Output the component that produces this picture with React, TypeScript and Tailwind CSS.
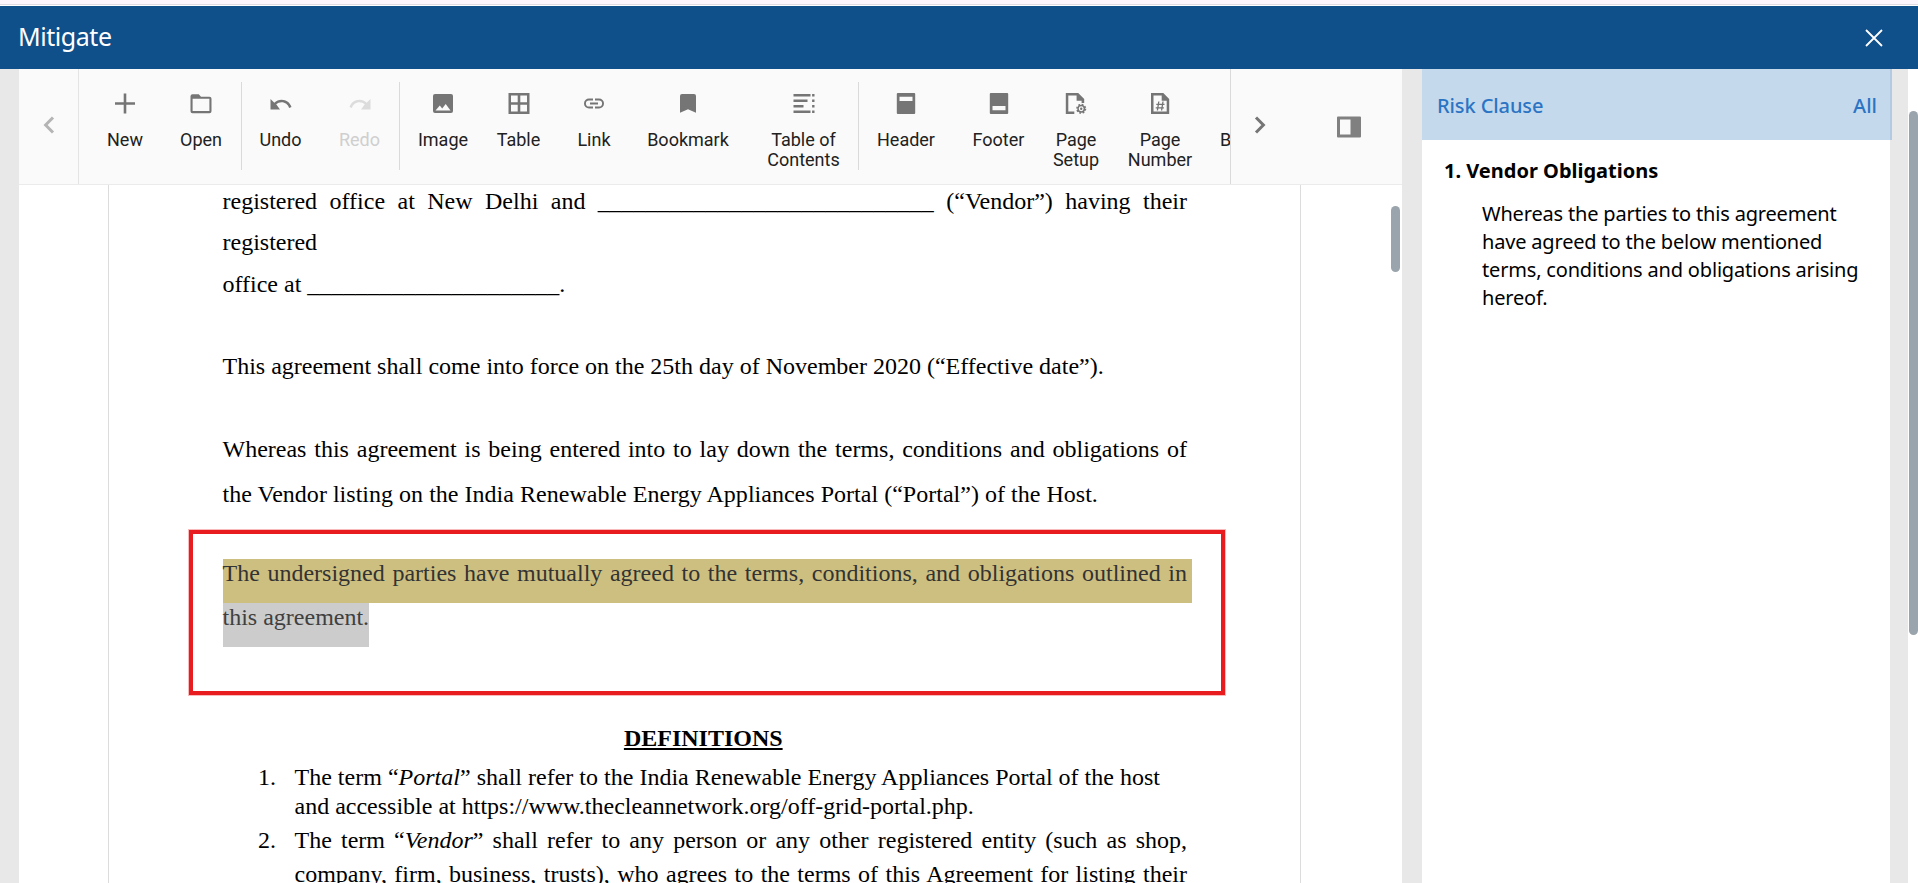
import React from 'react';

const Svg = ({ children, c = '#757575' }: { children: React.ReactNode; c?: string }) => (
  <svg width="24" height="24" viewBox="0 -0.5 24 24" fill={c} className="block shrink-0">{children}</svg>
);

const icons: Record<string, React.ReactNode> = {
  New: <path d="M10.7 2h2.6v8.7H22v2.6h-8.7V22h-2.6v-8.7H2v-2.6h8.7z" />,
  Open: <path fillRule="evenodd" d="M3.5 2.8h6.3l2.2 2.4h8.5a2 2 0 0 1 2 2v12.5a2 2 0 0 1-2 2h-17a2 2 0 0 1-2-2V4.8a2 2 0 0 1 2-2zM3.6 7.3v12.2h16.8V7.3z" />,
  Undo: <path d="M1.5 7.5l3.8 3.7C7.3 9.4 9.700 8.200 12.600 8.200c4.800 0 8.600 3 9.900 7.400l-2.400.8c-1-3.300-4-5.600-7.500-5.600-2 0-3.900.8-5.400 2L11 18H1.500z" />,
  Redo: <path d="M22.500 7.500l-3.800 3.700C16.700 9.400 14.300 8.200 11.400 8.200c-4.800 0-8.600 3-9.900 7.400l2.400.8c1-3.300 4-5.600 7.500-5.600 2 0 3.900.8 5.400 2L13 18h9.500z" />,
  Image: <path fillRule="evenodd" d="M4 2.500h16a2 2 0 0 1 2 2v15a2 2 0 0 1-2 2H4a2 2 0 0 1-2-2v-15a2 2 0 0 1 2-2zM4.500 19h15l-4.800-6.500-3.500 4.600-2.400-3z" />,
  Table: <path fillRule="evenodd" d="M1.500 1.500h21v21h-21zM4 4v6.700h6.700V4zM13.300 4v6.700H20V4zM4 13.300V20h6.700v-6.700zM13.300 13.300V20H20v-6.700z" />,
  Link: <path d="M3.900 12a3.100 3.100 0 0 1 3.100-3.100h4V7H7a5 5 0 0 0 0 10h4v-1.900H7A3.100 3.100 0 0 1 3.900 12zM8 13h8v-2H8zM17 7h-4v1.900h4a3.100 3.100 0 0 1 0 6.200h-4V17h4a5 5 0 0 0 0-10z" />,
  Bookmark: <path d="M6 2.500h12a2 2 0 0 1 2 2v16.700l-8-3.400-8 3.400V4.500a2 2 0 0 1 2-2z" />,
  TOC: <path d="M1.500 2.500h17v2.400h-17zM20.100 2.500h2.400v2.400h-2.400zM1.500 8h14v2.400h-14zM20.100 8h2.400v2.400h-2.400zM1.500 13.500h10v2.400h-10zM20.100 13.500h2.400v2.400h-2.400zM1.500 19h17v2.400h-17zM20.100 19h2.400v2.400h-2.400z" />,
  Header: <path fillRule="evenodd" d="M3.800 1.500h16.400a1 1 0 0 1 1 1v19a1 1 0 0 1-1 1H3.800a1 1 0 0 1-1-1v-19a1 1 0 0 1 1-1zM5.500 5.200v4.200h13V5.200z" />,
  Footer: <path fillRule="evenodd" d="M3.800 1.500h16.400a1 1 0 0 1 1 1v19a1 1 0 0 1-1 1H3.800a1 1 0 0 1-1-1v-19a1 1 0 0 1 1-1zM5.500 14.600v4.200h13v-4.200z" />,
  Setup: (
    <>
      <path d="M1.800 1.500h12.400l6 6v4h-2.600V9.300h-5V4H4.300v16h6v2.500H1.800z" />
      <circle cx="17.200" cy="17.300" r="3.200" fill="none" stroke="#757575" strokeWidth="1.500" />
      <circle cx="17.200" cy="17.300" r="4.300" fill="none" stroke="#757575" strokeWidth="1.500" strokeDasharray="1.700 1.677" />
      <circle cx="17.200" cy="17.300" r="1.200" />
    </>
  ),
  Number: (
    <>
      <path fillRule="evenodd" d="M3 1.500h12.300l5.900 6v15H3zM5.500 4v16h13.200V9.200h-5V4z" />
      <path d="M10.800 10l-1.400 9M15 10l-1.400 9M8.300 12.800h8.200M7.700 16.300h8.200" fill="none" stroke="#757575" strokeWidth="1.300" />
    </>
  ),
};

const Tool = ({ icon, lines, box, off }: { icon: string; lines: string[]; box: string; off?: boolean }) => (
  <button className={`flex shrink-0 flex-col items-center pt-[22px] ${box} ${off ? 'text-[#cfcfcf]' : 'text-[#212121]'}`}>
    <Svg c={off ? '#dcdcdc' : '#757575'}>{icons[icon]}</Svg>
    <span className="mt-[15px] block text-center text-lg leading-5 whitespace-nowrap">
      {lines.map((l) => <span key={l} className="block">{l}</span>)}
    </span>
  </button>
);

const Sep = ({ box = '' }: { box?: string }) => <div className={`mt-[13px] h-[88px] w-px shrink-0 bg-[#dadada] ${box}`} />;

const Toolbar = () => (
  <div className="flex h-[116px] shrink-0 border-b border-[#ebebeb] bg-[#fafafa] font-[Roboto,sans-serif]">
    <div className="flex w-[60px] shrink-0 items-center justify-center border-r border-[#e4e4e4] pb-[3px]">
      <svg width="12" height="18" viewBox="0 0 12 18" fill="none" stroke="#b4b4b4" strokeWidth="3"><path d="M10 1.500L2.600 9l7.400 7.500" /></svg>
    </div>
    <div className="flex w-[1151px] shrink-0 overflow-hidden pl-2">
      <Tool icon="New" lines={['New']} box="w-[76px]" />
      <Tool icon="Open" lines={['Open']} box="w-[76px]" />
      <Sep box="ml-[2px]" />
      <Tool icon="Undo" lines={['Undo']} box="w-[77px]" />
      <Tool icon="Redo" lines={['Redo']} box="ml-px w-[79px]" off />
      <Sep />
      <Tool icon="Image" lines={['Image']} box="w-[86px]" />
      <Tool icon="Table" lines={['Table']} box="w-[65px]" />
      <Tool icon="Link" lines={['Link']} box="w-[86px]" />
      <Tool icon="Bookmark" lines={['Bookmark']} box="w-[102px]" />
      <Tool icon="TOC" lines={['Table of', 'Contents']} box="ml-[10px] w-[109px]" />
      <Sep />
      <Tool icon="Header" lines={['Header']} box="w-[94px]" />
      <Tool icon="Footer" lines={['Footer']} box="w-[91px]" />
      <Tool icon="Setup" lines={['Page', 'Setup']} box="w-[64px]" />
      <Tool icon="Number" lines={['Page', 'Number']} box="w-[104px]" />
      <span className="mt-[61px] ml-2 text-lg leading-5 text-[#212121]">Break</span>
    </div>
    <div className="flex w-[59px] shrink-0 items-center justify-center border-l border-[#dadada] pb-[3px]">
      <svg width="12" height="18" viewBox="0 0 12 18" fill="none" stroke="#757575" strokeWidth="3"><path d="M2 1.500L9.400 9 2 16.500" /></svg>
    </div>
    <div className="flex flex-1 items-center justify-center pl-[7px]">
      <svg width="24" height="22" viewBox="0 0 24 22" fill="#808080"><path fillRule="evenodd" d="M1 .5h22a1 1 0 0 1 1 1v19a1 1 0 0 1-1 1H1a1 1 0 0 1-1-1v-19a1 1 0 0 1 1-1zM3 3.500v15h10.500v-15z" /></svg>
    </div>
  </div>
);

const J = 'text-justify [text-align-last:justify]';

const Document = () => (
  <div className="relative flex flex-1 overflow-hidden bg-white">
    <div className="ml-[89px] w-[1193px] shrink-0 border-x border-[#dcdcdc] pr-[113px] pl-[113.5px] text-2xl text-black font-['Liberation_Serif',serif]">
      <div className="-mt-1 whitespace-nowrap">
        <p className={`h-[41px] leading-[41px] ${J}`}>registered office at New Delhi and ____________________________ (“Vendor”) having their</p>
        <p className="h-[41px] leading-[41px]">registered</p>
        <p className="h-[41px] leading-[42px]">office at _____________________.</p>
        <p className="mt-[42px] h-[41px] leading-[41px]">This agreement shall come into force on the 25th day of November 2020 (“Effective date”).</p>
        <p className={`mt-[40px] h-[45px] leading-[45px] ${J}`}>Whereas this agreement is being entered into to lay down the terms, conditions and obligations of</p>
        <p className="h-[45px] leading-[45px] tracking-[0.02px]">the Vendor listing on the India Renewable Energy Appliances Portal (“Portal”) of the Host.</p>
        <p className={`mt-[42px] -mr-[5px] h-[44px] bg-[#cdbf80] pr-[5px] leading-7 text-[#333333] ${J}`}>The undersigned parties have mutually agreed to the terms, conditions, and obligations outlined in</p>
        <p className="h-[44px] w-[146px] bg-[#cccccc] leading-7 text-[#404040]">this agreement.</p>
        <h2 className="mt-[77px] mr-[3px] h-[29px] text-center leading-[29px] font-bold underline decoration-2 underline-offset-2">DEFINITIONS</h2>
        <ol>
          <li className="mt-[10px] flex">
            <span className="w-[72px] shrink-0 pl-[35.5px] leading-[29px]">1.</span>
            <div className="flex-1">
              <p className="h-[29px] leading-[29px] tracking-[0.01px]">The term “<i>Portal</i>” shall refer to the India Renewable Energy Appliances Portal of the host</p>
              <p className="h-[29px] leading-[29px]">and accessible at https://www.thecleannetwork.org/off-grid-portal.php.</p>
            </div>
          </li>
          <li className="flex">
            <span className="w-[72px] shrink-0 pl-[35.5px] leading-[38px]">2.</span>
            <div className="flex-1">
              <p className={`h-[34px] leading-[38px] ${J}`}>The term “<i>Vendor</i>” shall refer to any person or any other registered entity (such as shop,</p>
              <p className={`h-[34px] leading-[38px] ${J}`}>company, firm, business, trusts), who agrees to the terms of this Agreement for listing their</p>
            </div>
          </li>
        </ol>
      </div>
    </div>
    <div className="absolute top-[345px] left-[170px] h-[165px] w-[1036px] border-4 border-[#e81c1e] ring-1 ring-[#e81c1e]/30" />
    <div className="absolute top-[21px] right-[2px] h-[66px] w-[9px] rounded-full bg-[#9aa4ac]" />
  </div>
);

const RiskPanel = () => (
  <aside className="w-[468px] shrink-0 bg-white">
    <div className="-mr-[2px] flex h-[71px] items-center justify-between border-r-2 border-[#b3cae2] bg-[#c5d9ed] pt-[2px] pr-[13px] pl-[15px] text-[20px] font-medium text-[#2b74c4]">
      <span className="tracking-[-0.1px]">Risk Clause</span>
      <span>All</span>
    </div>
    <h3 className="mt-[17px] ml-[22px] text-[20px] leading-7 font-bold text-black">1. Vendor Obligations</h3>
    <div className="mt-[15px] ml-[60px] text-[20px] leading-7 tracking-[-0.18px] whitespace-nowrap text-black">
      <p>Whereas the parties to this agreement</p>
      <p>have agreed to the below mentioned</p>
      <p>terms, conditions and obligations arising</p>
      <p>hereof.</p>
    </div>
  </aside>
);

export default function App() {
  return (
    <div className="flex h-[883px] w-[1918px] flex-col overflow-hidden bg-[#e8e8e8] font-['Noto_Sans',sans-serif]">
      <div className="h-[6px] shrink-0 border-b border-white bg-[#fdf5fd]"><div className="h-[5px] border-b border-[#e0dbe2]" /></div>
      <header className="flex h-[63px] shrink-0 items-center justify-between bg-[#0f4f8a] pr-[35px] pl-[18px] text-white">
        <h1 className="-mt-[3px] text-[25px] leading-8 tracking-[-0.45px]">Mitigate</h1>
        <svg width="18" height="18" viewBox="0 0 18 18" stroke="white" strokeWidth="1.800"><path d="M1 1l16 16M17 1L1 17" /></svg>
      </header>
      <main className="flex min-h-0 flex-1">
        <section className="ml-[19px] flex w-[1383px] shrink-0 flex-col">
          <Toolbar />
          <Document />
        </section>
        <div className="w-5 shrink-0" />
        <RiskPanel />
        <div className="w-[18px] shrink-0" />
        <div className="w-[10px] shrink-0 bg-white pt-[42px] pl-px">
          <div className="h-[524px] rounded-full bg-[#9aa4ac]" />
        </div>
      </main>
    </div>
  );
}
